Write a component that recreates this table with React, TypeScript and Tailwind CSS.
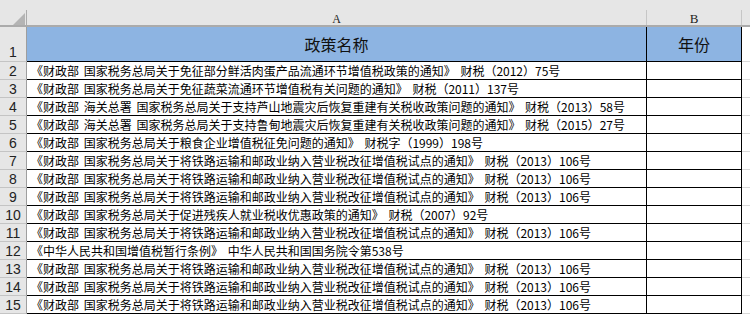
import React from 'react';

const T7 = '《财政部 国家税务总局关于将铁路运输和邮政业纳入营业税改征增值税试点的通知》 财税（2013）106号';

const rows: string[] = [
  '《财政部 国家税务总局关于免征部分鲜活肉蛋产品流通环节增值税政策的通知》 财税（2012）75号',
  '《财政部 国家税务总局关于免征蔬菜流通环节增值税有关问题的通知》 财税（2011）137号',
  '《财政部 海关总署 国家税务总局关于支持芦山地震灾后恢复重建有关税收政策问题的通知》 财税（2013）58号',
  '《财政部 海关总署 国家税务总局关于支持鲁甸地震灾后恢复重建有关税收政策问题的通知》 财税（2015）27号',
  '《财政部 国家税务总局关于粮食企业增值税征免问题的通知》 财税字（1999）198号',
  T7,
  T7,
  T7,
  '《财政部 国家税务总局关于促进残疾人就业税收优惠政策的通知》 财税（2007）92号',
  T7,
  '《中华人民共和国增值税暂行条例》 中华人民共和国国务院令第538号',
  T7,
  T7,
  T7,
];

const cjk = { fontFamily: '"Noto Sans CJK SC", "Liberation Sans", sans-serif' };

export default function App() {
  return (
    <div className="w-[750px] h-[315px] overflow-hidden bg-white text-black" style={cjk}>
      {/* Column headers */}
      <div className="flex h-[27px] pt-[10px] bg-[#e6e6e6] border-b-2 border-[#ababab]">
        <div className="w-[27px] shrink-0 h-[15px] border-r border-[#ababab] relative">
          <svg width="12" height="12" viewBox="0 0 12 12" className="absolute left-[13px] top-[3px]">
            <polygon points="12,0 12,12 0,12" fill="#b4b4b4" />
          </svg>
        </div>
        <div
          className="w-[620px] shrink-0 h-[15px] border-r border-[#c6c6c6] flex items-end justify-center text-[12px] leading-none text-[#222]"
          style={{ fontFamily: '"Liberation Serif", serif' }}
        >
          A
        </div>
        <div
          className="w-[95px] shrink-0 h-[15px] border-r border-[#c6c6c6] flex items-end justify-center text-[13px] leading-none text-[#222]"
          style={{ fontFamily: '"Liberation Serif", serif' }}
        >
          B
        </div>
        <div className="flex-1" />
      </div>

      {/* Row 1 */}
      <div className="flex h-[35px]">
        <div
          className="w-[27px] shrink-0 bg-[#e6e6e6] border-r border-b border-r-[#9e9e9e] border-b-[#c4c4c4] flex items-end justify-center text-[14px] leading-[17px] text-[#222]"
          style={{ fontFamily: '"Liberation Sans", sans-serif' }}
        >
          1
        </div>
        <div className="w-[620px] shrink-0 bg-[#8db4e2] border-r border-b border-black flex items-center justify-center text-[16px] text-[#111]">
          政策名称
        </div>
        <div className="w-[95px] shrink-0 bg-[#8db4e2] border-r border-b border-black flex items-center justify-center text-[16px] text-[#111]">
          年份
        </div>
        <div className="flex-1 border-b border-[#d9d9d9]" />
      </div>

      {/* Data rows */}
      {rows.map((text, i) => (
        <div key={i} className="flex h-[18px]">
          <div
            className="w-[27px] shrink-0 bg-[#e6e6e6] border-r border-b border-r-[#9e9e9e] border-b-[#c4c4c4] flex items-end justify-center text-[14px] leading-[16px] text-[#222]"
            style={{ fontFamily: '"Liberation Sans", sans-serif' }}
          >
            {i + 2}
          </div>
          <div className="w-[620px] shrink-0 border-r border-b border-black pl-[4px] flex items-center text-[12px] leading-none whitespace-pre overflow-hidden [word-spacing:2px]">
            {text}
          </div>
          <div className="w-[95px] shrink-0 border-r border-b border-black" />
          <div className="flex-1 border-b border-[#d9d9d9]" />
        </div>
      ))}
    </div>
  );
}
